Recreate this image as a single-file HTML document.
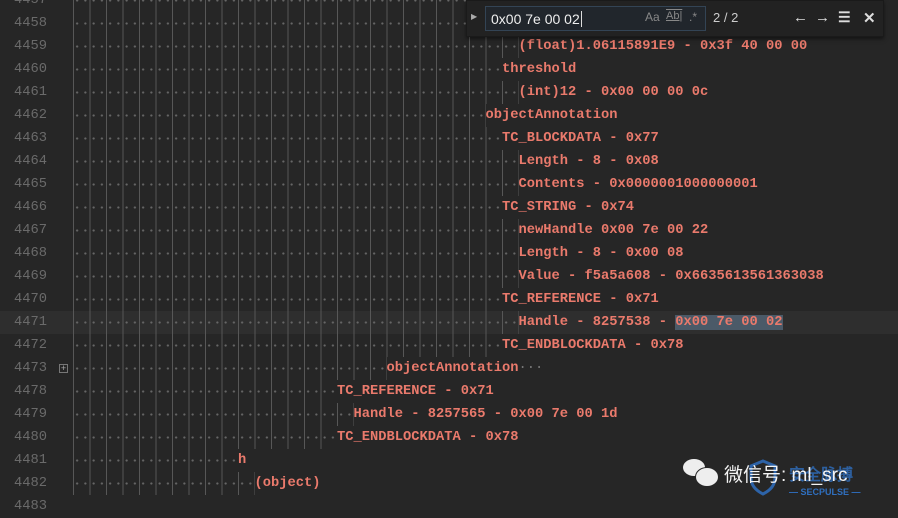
<!DOCTYPE html>
<html><head><meta charset="utf-8"><style>
html,body{margin:0;padding:0;}
body{width:898px;height:514px;background:#262626;position:relative;overflow:hidden;font-family:"Liberation Mono",monospace;font-size:13.75px;}
.r{position:absolute;left:0;height:23px;width:898px;line-height:23px;white-space:pre;}
.hl{background:#2e2e2e;}
.n{position:absolute;left:0;top:0;width:47px;text-align:right;color:#6a6a6a;}
.i{position:absolute;left:73px;top:0;height:23px;
background-image:radial-gradient(circle,#666 0 0.9px,transparent 1.3px),linear-gradient(to right,#575757 0 1px,transparent 1px);
background-size:8.25px 23px,16.5px 23px;background-repeat:repeat-x,repeat-x;}
.t{position:absolute;top:0;color:#ea7a6c;font-weight:bold;}
.sel{background:#4b5a68;}
.fold{position:absolute;left:59px;top:7px;width:7px;height:7px;border:1px solid #777;color:#aaa;font-size:9px;line-height:7px;text-align:center;font-family:"Liberation Sans",sans-serif;}
#find{position:absolute;left:466px;top:0;width:416px;height:35px;background:#222;border:1px solid #1a1a1a;box-shadow:0 2px 4px rgba(0,0,0,.5);font-family:"Liberation Sans",sans-serif;}
#inp{position:absolute;left:18px;top:5px;width:221px;height:25px;background:#21262c;border:1px solid #334455;color:#eee;font-size:14px;line-height:25px;padding-left:5px;box-sizing:border-box;}
.ic{position:absolute;top:9px;color:#888;font-size:12px;}
.wi{position:absolute;top:8px;color:#ddd;font-size:15px;font-weight:bold;}
</style></head><body>
<div class="r" style="top:-11px"><span class="n">4457</span><span class="i" style="width:429px"></span></div>
<div class="r" style="top:12px"><span class="n">4458</span><span class="i" style="width:429px"></span></div>
<div class="r" style="top:35px"><span class="n">4459</span><span class="i" style="width:445.5px"></span><span class="t" style="left:518.5px">(float)1.06115891E9 - 0x3f 40 00 00</span></div>
<div class="r" style="top:58px"><span class="n">4460</span><span class="i" style="width:429px"></span><span class="t" style="left:502px">threshold</span></div>
<div class="r" style="top:81px"><span class="n">4461</span><span class="i" style="width:445.5px"></span><span class="t" style="left:518.5px">(int)12 - 0x00 00 00 0c</span></div>
<div class="r" style="top:104px"><span class="n">4462</span><span class="i" style="width:412.5px"></span><span class="t" style="left:485.5px">objectAnnotation</span></div>
<div class="r" style="top:127px"><span class="n">4463</span><span class="i" style="width:429px"></span><span class="t" style="left:502px">TC_BLOCKDATA - 0x77</span></div>
<div class="r" style="top:150px"><span class="n">4464</span><span class="i" style="width:445.5px"></span><span class="t" style="left:518.5px">Length - 8 - 0x08</span></div>
<div class="r" style="top:173px"><span class="n">4465</span><span class="i" style="width:445.5px"></span><span class="t" style="left:518.5px">Contents - 0x0000001000000001</span></div>
<div class="r" style="top:196px"><span class="n">4466</span><span class="i" style="width:429px"></span><span class="t" style="left:502px">TC_STRING - 0x74</span></div>
<div class="r" style="top:219px"><span class="n">4467</span><span class="i" style="width:445.5px"></span><span class="t" style="left:518.5px">newHandle 0x00 7e 00 22</span></div>
<div class="r" style="top:242px"><span class="n">4468</span><span class="i" style="width:445.5px"></span><span class="t" style="left:518.5px">Length - 8 - 0x00 08</span></div>
<div class="r" style="top:265px"><span class="n">4469</span><span class="i" style="width:445.5px"></span><span class="t" style="left:518.5px">Value - f5a5a608 - 0x6635613561363038</span></div>
<div class="r" style="top:288px"><span class="n">4470</span><span class="i" style="width:429px"></span><span class="t" style="left:502px">TC_REFERENCE - 0x71</span></div>
<div class="r hl" style="top:311px"><span class="n">4471</span><span class="i" style="width:445.5px"></span><span class="t" style="left:518.5px">Handle - 8257538 - <span class="sel">0x00 7e 00 02</span></span></div>
<div class="r" style="top:334px"><span class="n">4472</span><span class="i" style="width:429px"></span><span class="t" style="left:502px">TC_ENDBLOCKDATA - 0x78</span></div>
<div class="r" style="top:357px"><span class="n">4473</span><span class="fold">+</span><span class="i" style="width:313.5px"></span><span class="t" style="left:386.5px">objectAnnotation<span style="color:#777;font-weight:normal">···</span></span></div>
<div class="r" style="top:380px"><span class="n">4478</span><span class="i" style="width:264px"></span><span class="t" style="left:337px">TC_REFERENCE - 0x71</span></div>
<div class="r" style="top:403px"><span class="n">4479</span><span class="i" style="width:280.5px"></span><span class="t" style="left:353.5px">Handle - 8257565 - 0x00 7e 00 1d</span></div>
<div class="r" style="top:426px"><span class="n">4480</span><span class="i" style="width:264px"></span><span class="t" style="left:337px">TC_ENDBLOCKDATA - 0x78</span></div>
<div class="r" style="top:449px"><span class="n">4481</span><span class="i" style="width:165px"></span><span class="t" style="left:238px">h</span></div>
<div class="r" style="top:472px"><span class="n">4482</span><span class="i" style="width:181.5px"></span><span class="t" style="left:254.5px">(object)</span></div>
<div class="r" style="top:495px"><span class="n">4483</span></div>

<div id="find">
<span style="position:absolute;left:4px;top:11px;color:#aaa;font-size:8px">▶</span>
<div id="inp">0x00 7e 00 02<span style="border-left:1px solid #ddd;margin-left:1px"></span></div>
<span class="ic" style="left:178px">Aa</span>
<span class="ic" style="left:199px;text-decoration:underline overline;font-size:11px">Ab|</span>
<span class="ic" style="left:222px">.*</span>
<span style="position:absolute;left:246px;top:9px;color:#ccc;font-size:13px">2 / 2</span>
<span class="wi" style="left:326px">←</span>
<span class="wi" style="left:348px">→</span>
<span class="wi" style="left:371px;font-size:14px">☰</span>
<span class="wi" style="left:396px">✕</span>
</div>
<div style="position:absolute;left:683px;top:455px;width:40px;height:36px;">
<div style="position:absolute;left:0;top:4px;width:22px;height:17px;background:#eee;border-radius:50%"></div>
<div style="position:absolute;left:12px;top:12px;width:22px;height:18px;background:#eee;border-radius:50%;border:1px solid #262626"></div>
</div>
<svg style="position:absolute;left:745px;top:458px" width="140" height="40"><path d="M18 3 L30 8 L30 20 Q30 30 18 36 Q6 30 6 20 L6 8 Z" fill="none" stroke="#2f6fbf" stroke-width="3" opacity=".85"/><text x="44" y="22" fill="#2f6fbf" font-size="16" font-family="Liberation Sans" font-weight="bold" opacity=".8">安全脉搏</text><text x="44" y="37" fill="#2f6fbf" font-size="9" font-family="Liberation Sans" font-weight="bold">— SECPULSE —</text></svg>
<div style="position:absolute;left:724px;top:460px;color:#f4f4f4;font-size:19px;font-family:'Liberation Sans','Noto Sans CJK SC',sans-serif">微信号: ml_src</div>
</body></html>
